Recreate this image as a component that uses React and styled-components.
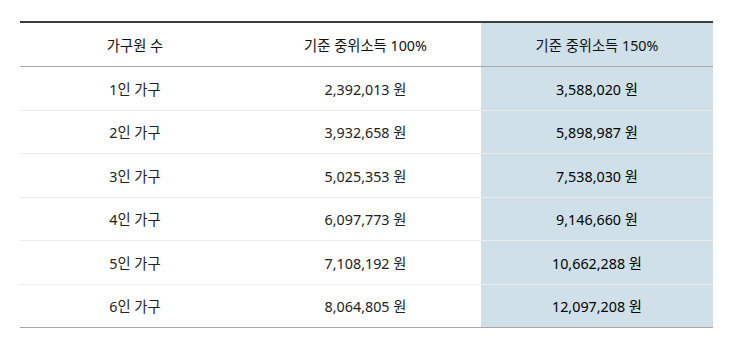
import React from "react";
import styled, { createGlobalStyle } from "styled-components";

const rows = [
  ["1인 가구", "2,392,013 원", "3,588,020 원"],
  ["2인 가구", "3,932,658 원", "5,898,987 원"],
  ["3인 가구", "5,025,353 원", "7,538,030 원"],
  ["4인 가구", "6,097,773 원", "9,146,660 원"],
  ["5인 가구", "7,108,192 원", "10,662,288 원"],
  ["6인 가구", "8,064,805 원", "12,097,208 원"],
];

export default function App() {
  return (
    <>
      <GlobalStyle />
      <Wrapper>
        <Table>
          <colgroup>
            <col style={{ width: "230px" }} />
            <col style={{ width: "231px" }} />
            <col style={{ width: "232px" }} />
          </colgroup>
          <thead>
            <tr>
              <Th>가구원 수</Th>
              <Th>기준 중위소득 100%</Th>
              <Th $highlight>기준 중위소득 150%</Th>
            </tr>
          </thead>
          <tbody>
            {rows.map((r) => (
              <tr key={r[0]}>
                <Td>{r[0]}</Td>
                <Td>{r[1]}</Td>
                <Td $highlight>{r[2]}</Td>
              </tr>
            ))}
          </tbody>
        </Table>
      </Wrapper>
    </>
  );
}

const GlobalStyle = createGlobalStyle`
  body {
    margin: 0;
    background: #fff;
    font-family: "Noto Sans", "Noto Sans CJK KR", sans-serif;
  }
`;

const Wrapper = styled.div`
  padding: 21px 21px 0 20px;
`;

const Table = styled.table`
  width: 693px;
  border-collapse: collapse;
  table-layout: fixed;
  border-top: 2px solid #3d3d3d;
  border-bottom: 1px solid #a8a8a8;
  font-size: 14.3px;
  color: #222;
`;

const Th = styled.th`
  height: 43px;
  padding: 0;
  font-weight: 400;
  text-align: center;
  border-bottom: 1px solid #a8a8a8;
  background: ${(p) => (p.$highlight ? "#cfe0e8" : "#fff")};
  color: #111;
`;

const Td = styled.td`
  height: 42.5px;
  padding: 0;
  text-align: center;
  border-top: 1px solid #ececec;
  background: ${(p) => (p.$highlight ? "#cfe0e8" : "#fff")};
  color: ${(p) => (p.$highlight ? "#000" : "#222")};

  tr:first-child > & {
    border-top: none;
  }
`;
